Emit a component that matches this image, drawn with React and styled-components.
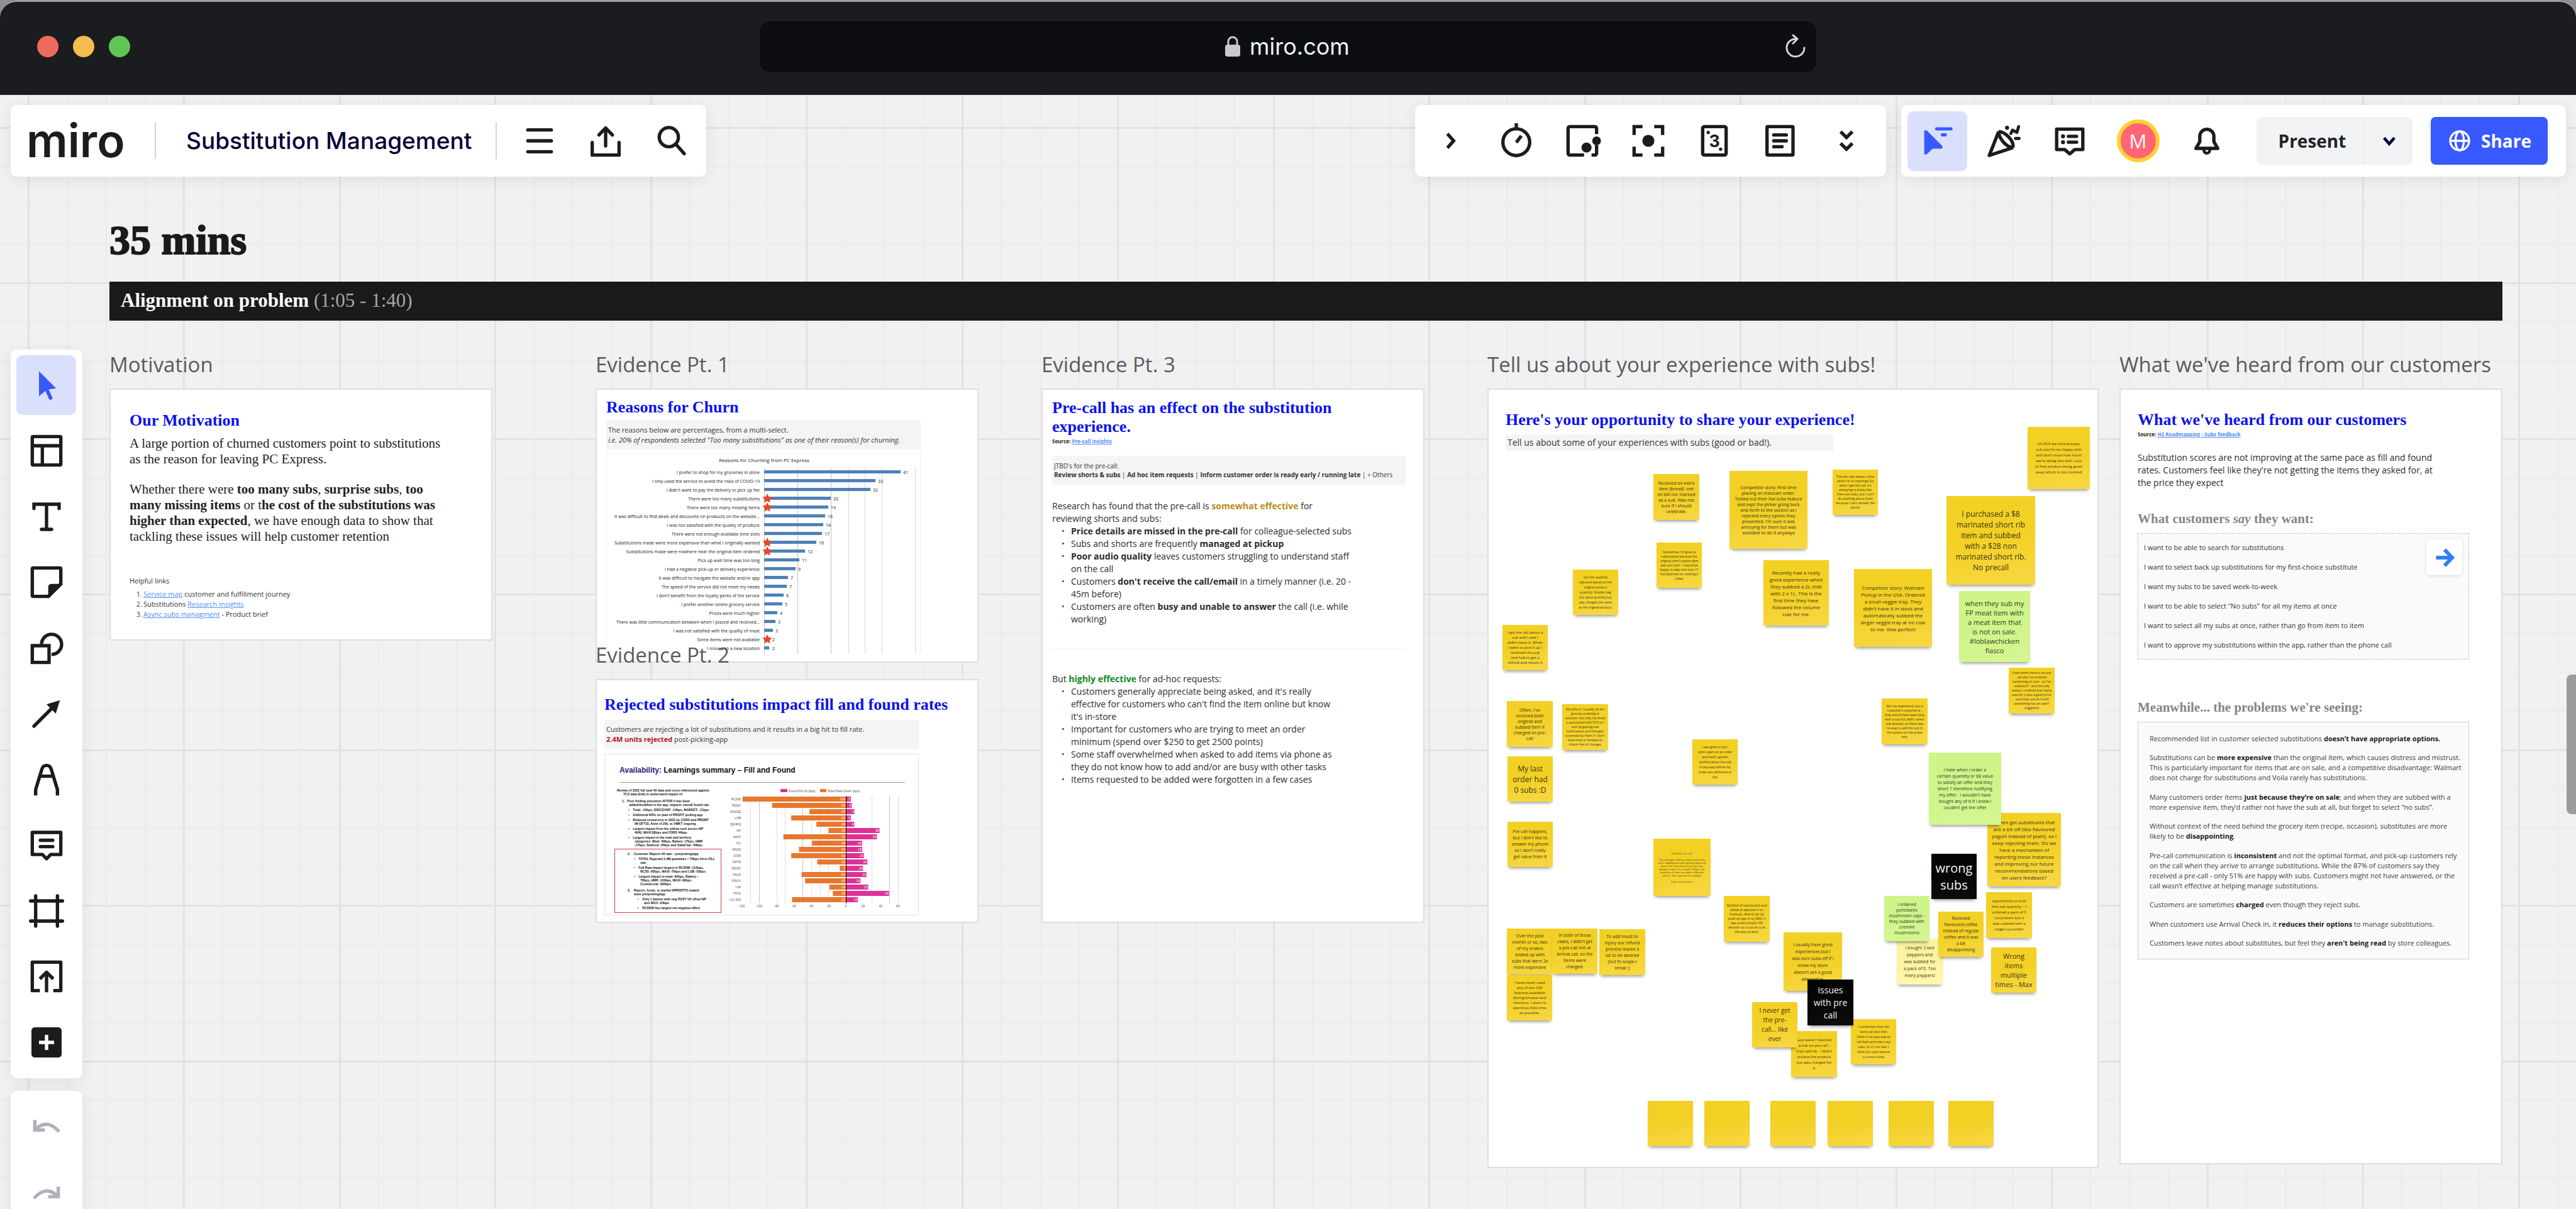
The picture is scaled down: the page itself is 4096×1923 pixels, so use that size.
import React from "react";
import styled, { createGlobalStyle, css } from "styled-components";

const sans = `"Open Sans", "Noto Sans", sans-serif`;
const serif = `"Liberation Serif", "Times New Roman", serif`;
const ink = "#1c1c1e";
const brand = "#3859ff";

const Global = createGlobalStyle`
  *, *::before, *::after { box-sizing: border-box; }
  body { margin: 0; background: #8f9196; font-family: ${sans}; color: #333; }
  h1, h2, h3, p, ul, ol { margin: 0; padding: 0; font-weight: inherit; }
  ul, ol { list-style: none; }
  button, input { font: inherit; color: inherit; border: 0; padding: 0; margin: 0; background: none; }
`;

/* ---------- browser window ---------- */

const Window = styled.div`
  display: flex;
  flex-direction: column;
  height: 100vh;
  overflow: hidden;
`;

const Chrome = styled.header`
  display: grid;
  grid-template-columns: 1fr 41% 1fr;
  align-items: center;
  height: 151px;
  flex: none;
  padding-bottom: 3px;
  background: #1b1c1f;
  box-shadow: inset 0 3px 0 #9fa1a7;
  border-radius: 26px 26px 0 0;
`;

const Lights = styled.div`
  display: flex;
  gap: 23px;
  padding-left: 59px;
`;

const Light = styled.span`
  width: 34px;
  height: 34px;
  border-radius: 50%;
  background: ${(p) => p.$color};
`;

const Address = styled.div`
  display: flex;
  align-items: center;
  height: 80px;
  padding: 0 16px;
  border-radius: 16px;
  background: #0c0e11;
  color: #f2f2f2;
  font: 400 36px/44px Inter, sans-serif;
`;

const AddressField = styled.label`
  display: flex;
  flex: 1;
  align-items: center;
  justify-content: center;
  gap: 14px;
  padding-left: 36px;
`;

const AddressInput = styled.input`
  width: 164px;
  outline: none;
`;

const PlainButton = styled.button`
  display: flex;
  align-items: center;
  justify-content: center;
  cursor: pointer;
`;

/* ---------- canvas ---------- */

const minor = "#ebebec";
const major = "#e2e2e3";
const gridStops = `
  ${major} 0 3px, transparent 3px 62px,
  ${minor} 62px 64px, transparent 64px 124px,
  ${minor} 124px 126px, transparent 126px 186px,
  ${minor} 186px 188px, transparent 188px 247px,
  ${major} 247px 250px, transparent 250px 309px,
  ${minor} 309px 311px, transparent 311px 371px,
  ${minor} 371px 373px, transparent 373px 433px,
  ${minor} 433px 435px, transparent 435px 495px`;

const Canvas = styled.main`
  position: relative;
  flex: 1;
  min-height: 0;
  overflow: hidden;
  background-color: #f1f1f1;
  background-image: linear-gradient(to right, ${gridStops}), linear-gradient(to bottom, ${gridStops});
  background-size: 495px 495px;
  background-position: 44px 51px;
`;

const panel = css`
  background: #fff;
  border-radius: 10px;
  box-shadow: 0 4px 24px rgba(20, 20, 50, 0.08);
`;

const TopBar = styled.div`
  position: absolute;
  z-index: 5;
  top: 16px;
  left: 17px;
  right: 16px;
  display: flex;
  gap: 24px;
`;

const Panel = styled.section`
  ${panel}
  display: flex;
  align-items: center;
  height: 114px;
  gap: ${(p) => p.$gap ?? 10}px;
  padding: 0 ${(p) => p.$end ?? 10}px 0 ${(p) => p.$start ?? 10}px;
  margin-right: ${(p) => (p.$push ? "auto" : 0)};
`;

const Logo = styled.a`
  width: 172px;
  color: ${ink};
  text-decoration: none;
  font: 600 73px/92px Inter, sans-serif;
`;

const Rule = styled.span`
  width: 2px;
  height: 58px;
  background: #d3d2de;
  margin: 0 ${(p) => p.$end}px 0 ${(p) => p.$start}px;
`;

const BoardName = styled.h1`
  color: #050038;
  font: 500 37px/48px Inter, sans-serif;
  white-space: nowrap;
`;

const IconButton = styled(PlainButton)`
  width: 95px;
  height: 95px;
  flex: none;
  border-radius: 10px;
  color: ${(p) => (p.$on ? brand : p.$faded ? "#aeb0bd" : ink)};
  background: ${(p) => (p.$on ? "#dadffc" : "transparent")};
  margin: 0 ${(p) => p.$side ?? 0}px;
`;

const Avatar = styled.span`
  display: flex;
  align-items: center;
  justify-content: center;
  width: 68px;
  height: 68px;
  border: 6px solid #ffd02f;
  border-radius: 50%;
  background: #ff6575;
  color: #fff;
  font: 500 31px/40px ${sans};
`;

const Split = styled.div`
  display: flex;
  height: 76px;
  margin: 0 19px 0 22px;
  border-radius: 8px;
  background: #f2f3f5;
  font: 700 28px/40px ${sans};
  color: #222428;
`;

const SplitMain = styled(PlainButton)`
  width: 171px;
  padding-left: 6px;
`;

const SplitMore = styled(PlainButton)`
  width: 77px;
  border-left: 2px solid #ebecf1;
  color: #050038;
`;

const Share = styled(PlainButton)`
  width: 186px;
  height: 76px;
  gap: 14px;
  border-radius: 8px;
  background: ${brand};
  color: #fff;
  font: 700 28px/40px ${sans};
`;

const Rail = styled.nav`
  position: absolute;
  z-index: 4;
  top: 405px;
  left: 17px;
  display: flex;
  flex-direction: column;
  gap: 20px;
`;

const RailPanel = styled.div`
  ${panel}
  display: flex;
  flex-direction: column;
  justify-content: space-between;
  width: 114px;
  height: ${(p) => p.$height}px;
  padding: 9px 9px 10px;
`;

const ScrollThumb = styled.div`
  position: absolute;
  z-index: 6;
  right: 0;
  top: 922px;
  width: 15px;
  height: 222px;
  border-radius: 8px 0 0 8px;
  background: #9c9c9e;
`;

/* ---------- board ---------- */

const Board = styled.div`
  padding: 198px 117px 0 174px;
`;

const Duration = styled.h2`
  font: 700 66px/66px ${serif};
  color: #1a1a1a;
  -webkit-text-stroke: 2px #1a1a1a;
`;

const Banner = styled.h2`
  height: 62px;
  margin: 33px 0 48px;
  padding-left: 18px;
  background: #1a1a1a;
  color: #fff;
  font: 700 31px/60px ${serif};
`;

const BannerTime = styled.span`
  color: #a6a6a6;
  font-weight: 400;
`;

const Columns = styled.div`
  display: flex;
  align-items: flex-start;
`;

const Column = styled.div`
  flex: ${(p) => p.$grow ?? 609} 1 0;
  min-width: 0;
  margin-left: ${(p) => p.$gap ?? 0}px;
`;

const FrameTitle = styled.h3`
  position: relative;
  z-index: 1;
  margin: ${(p) => (p.$overlap ? "-34px" : 0)} 0 16px;
  color: #5a5a5c;
  font: 400 33px/44px ${sans};
  white-space: nowrap;
`;

const Frame = styled.article`
  position: relative;
  height: ${(p) => p.$height}px;
  padding: ${(p) => p.$top}px ${(p) => p.$right ?? 28}px 0 ${(p) => p.$left}px;
  border: 2px solid #dedede;
  background: #fff;
`;

const Heading = styled.h3`
  color: #0a12f0;
  font: 700 26px/30px ${serif};
  white-space: nowrap;
`;

const SubHeading = styled.h3`
  margin: ${(p) => p.$above}px 0 10px;
  color: #858585;
  font: 700 21px/25px ${serif};
`;

const Prose = styled.p`
  margin-top: ${(p) => p.$above}px;
  color: #222;
  font: 400 21px/25px ${serif};
  white-space: nowrap;
`;

const Small = styled.div`
  margin-top: ${(p) => p.$above ?? 0}px;
  color: #333;
  font: 400 11px/16px ${sans};
  white-space: nowrap;
`;

const Body = styled.div`
  margin-top: ${(p) => p.$above}px;
  color: #2b2b2b;
  font: 400 14px/20px ${sans};
  white-space: nowrap;
`;

const Bullets = styled.ul`
  li {
    position: relative;
    padding-left: 30px;
  }
  li::before {
    content: "•";
    position: absolute;
    left: 15px;
    font-size: 12px;
  }
`;

const LinkList = styled.ol`
  margin-top: 5px;
  padding-left: 22px;
  list-style: decimal;
  li::marker { font-size: 10px; }
`;

const Link = styled.a`
  color: #4f8df5;
  text-decoration: underline;
`;

const Source = styled.p`
  margin-top: ${(p) => p.$above}px;
  color: #222;
  font: 700 8px/12px ${sans};
`;

const Callout = styled.div`
  max-width: ${(p) => p.$width ?? 564}px;
  height: ${(p) => p.$height ?? 46}px;
  margin-top: ${(p) => p.$above}px;
  padding: ${(p) => p.$inset ?? 7}px 3px 0;
  background: #f4f4f4;
  color: #333;
  font: 400 ${(p) => p.$size ?? 11}px / ${(p) => p.$line ?? 16}px ${sans};
  white-space: nowrap;
`;

const Accent = styled.b`
  color: ${(p) => p.$color};
`;

const Divider = styled.hr`
  height: 1px;
  margin: 37px 0 0;
  border: 0;
  background: #ececec;
`;

const ChartBox = styled.div`
  width: 500px;
  max-width: 100%;
  height: 318px;
  margin-top: 6px;
  border: 1px solid #f0f0f0;
  border-bottom: 0;
`;

const WantBox = styled.div`
  position: relative;
  padding: 14px 9px;
  border: 1px dashed #bdbdbd;
  background: #fafafa;
`;

const WantList = styled.ul`
  display: flex;
  flex-direction: column;
  gap: 15px;
  color: #333;
  font: 400 11px/16px ${sans};
`;

const GoButton = styled(PlainButton)`
  position: absolute;
  top: 9px;
  right: 10px;
  width: 57px;
  height: 57px;
  border-radius: 5px;
  background: #fff;
  color: #2d7ff9;
  box-shadow: 0 1px 4px rgba(0, 0, 0, 0.15);
`;

const ProblemBox = styled.div`
  display: flex;
  flex-direction: column;
  justify-content: space-between;
  height: 378px;
  padding: 18px 0 17px 18px;
  border: 1px solid #cfcfcf;
  background: #fafafa;
  color: #3a3a3a;
  font: 400 11px/16px ${sans};
  white-space: nowrap;
  b { color: #1a1a1a; }
`;

/* ---------- summary slide ---------- */

const Slide = styled.div`
  width: 500px;
  max-width: 100%;
  height: 257px;
  margin-top: 8px;
  padding: 17px 21px 0 15px;
  border: 1px solid #e2e2e2;
`;

const SlideTitle = styled.h4`
  margin: 0 0 0 8px;
  padding-bottom: 11px;
  border-bottom: 1px solid #9a9a9a;
  color: #111;
  font: 700 12px/16px "Liberation Sans", Arial, sans-serif;
  span { color: #1c2473; }
`;

const SlideBody = styled.div`
  display: flex;
  justify-content: space-between;
  margin-top: 9px;
`;

const SlideNotes = styled.div`
  width: 170px;
  color: #111;
  font: 700 5px/6px "Liberation Sans", Arial, sans-serif;
  white-space: pre;
`;

const SlideItem = styled.p`
  margin: 0 0 ${(p) => p.$after ?? 2}px ${(p) => p.$indent ?? 22}px;
  padding-left: 10px;
  text-indent: -10px;
`;

const RedBox = styled.div`
  height: 102px;
  padding: 4px 4px 0 0;
  border: 1px solid #c8413f;
`;

/* ---------- sticky notes ---------- */

const tones = {
  yellow: ["#f3d024", "#f7d843", "#3a3415"],
  green: ["#cff48a", "#d5f692", "#2f3a1c"],
  black: ["#050505", "#0d0d0d", "#f4f4f4"],
  pale: ["#fbf3a0", "#fff9b0", "#3a3718"],
};

const Note = styled.div`
  position: absolute;
  left: ${(p) => p.$x}px;
  top: ${(p) => p.$y}px;
  display: flex;
  align-items: center;
  justify-content: center;
  width: ${(p) => p.$s}px;
  height: ${(p) => p.$s}px;
  margin: -2px 0 0 -2px;
  background: linear-gradient(170deg, ${(p) => tones[p.$tone][0]} 45%, ${(p) => tones[p.$tone][1]});
  box-shadow: 0 5px 5px -3px rgba(0, 0, 0, 0.42);
  color: ${(p) => tones[p.$tone][2]};
  font: 400 ${(p) => p.$f}px / ${(p) => p.$l}px ${sans};
  text-align: center;
  white-space: pre;
`;

// x, y, side, font size, line height, text, tone
const notes = [
  [264, 136, 73, 7, 9, "Received an extra\nitem (bread) -not\non bill nor marked\nas a sub. Was not\nsure if I should\ncelebrate."],
  [385, 131, 124, 7, 9, "Competitor story: First time\nplacing an Instacart order.\nTested out their live subs feature\nand kept the picker going back\nand forth to the section as I\nrejected every option they\npresented. I'm sure it was\nannoying for them but was\navailable to do it anyways"],
  [549, 129, 72, 5, 7, "The pre-calls always come\nwhen I'm in meetings! So\nwhen I get the call, it's\nannoying to know that\nthere are subs, but I can't\ndo anything about them\nbecause I can't answer the\nphone"],
  [859, 61, 99, 6, 9, "On PCX we refund every\nsub you're not happy with\nand don't track how much\nwe're doing this with. Lots\nof free product being given\naway which is not counted"],
  [730, 171, 141, 12, 17, "I purchased a $8\nmarinated short rib\nitem and subbed\nwith a $28 non\nmarinated short rib.\nNo precall"],
  [269, 245, 72, 5, 7, "Sometimes I'm given a\nsubstitution because the\noriginal item's expiry date\nwas too soon - I would be\nhappy to take that item if I\nhad planned on cooking it\ntoday"],
  [136, 288, 72, 5, 8, "Got the quantity\nadjusted based on the\noriginal product\nquantity. Smaller bag\nbut same quantity but\nwas charged the same\nas the original product."],
  [439, 273, 104, 8, 11, "Recently had a really\ngood experience when\nthey subbed a 2L milk\nwith 2 x 1L. This is the\nfirst time they have\nfollowed the volume\nrule for me."],
  [583, 287, 124, 8, 11, "Competitor story: Walmart\nPickup in the USA. Ordered\na small veggie tray. They\ndidn't have it in stock and\nautomatically subbed the\nlarger veggie tray at no cost\nto me. Was perfect!"],
  [750, 322, 113, 11, 15, "when they sub my\nFP meat item with\na meat item that\nis not on sale.\n#loblawchicken\nfiasco", "green"],
  [24, 376, 72, 6, 8, "I got the call about a\nsub and I said I\ndidn't want it. When\nI went to pick it up I\nreceived the sub\nand had to get a\nrefund and return it"],
  [829, 444, 73, 5, 7, "I hate when there is no pre-\ncall and I've ordered\nsomething on sale - so I've\nordered 6 - and the only\nreason I ordered that many\nwas b/c it was a good price\n- and they sub all 6 with\nsomething not on sale!!!\nArgghhhh"],
  [31, 497, 73, 7, 9, "Often, I've\nreceived both\noriginal and\nsubbed item if\ncharged on pre-\ncall"],
  [119, 502, 73, 5, 7, "My wife or I usually do the\ngrocery ordering in\nisolation, but only my email\nis associated with PCX so I\nend up getting sub\nnotifications and she gets\nsurprised by them if I don't\nhave time to forward or\ninform her of changes"],
  [627, 493, 73, 5, 7, "Not my experience, but a\ncustomer's experience -\nthey would have been okay\nwith a sub but didn't select\nsub allowed, so there was\nno way to add the sub in\nthe system on the picker\nend."],
  [32, 585, 72, 12, 17, "My last\norder had\n0 subs :D"],
  [326, 558, 72, 5, 8, "I was given a sub I\ndidn't want on an order\nand hadn't gotten\nnotified about the sub\nin any way before my\norder was delivered to\nme."],
  [795, 675, 117, 8, 11, "I often get substitutes that\nare a bit off (like flavoured\nyogurt instead of plain), so I\nkeep rejecting them. Do we\nhave a mechanism of\nreporting these instances\nand improving our future\nrecommendations based\non users feedback?"],
  [702, 579, 115, 7, 10, "I hate when i order a\ncertain quantity or $$ value\nto satisfy an offer and they\nshort 1 therefore nullifying\nmy offer.  I wouldn't have\nbought any of it if i knew i\ncoudln't get the offer", "green"],
  [32, 689, 72, 7, 10, "Pre call happens,\nbut I don't like to\nanswer my phone\nso I don't really\nget value from it"],
  [264, 716, 91, 4, 5, "I liked the pre call.\n\nThe colleague told me some items they\nwere subbing out and I quickly approved\nthem. The meat they chose was also\ngoing to expire in a couple of days and\nasked me if I was cool with it. My wife\nwasn't...but I approved it anyway.\n\nEasy conversation."],
  [706, 740, 72, 20, 27, "wrong\nsubs", "black"],
  [376, 807, 73, 5, 7, "Notified of substitution and\nasked to approve it on\nInstacart. Able to do via\npush on app or by SMS. It\nwas a very simple Y/N\ndecision so could do it on\nthe spot at work."],
  [651, 875, 73, 7, 11, "I bought 3 bell\npeppers and\nwas subbed for\na pack of 6. Too\nmany peppers!", "pale"],
  [631, 807, 72, 7, 9, "I ordered\nportobello\nmushroom caps -\nthey subbed with\ncremini\nmushrooms", "green"],
  [793, 801, 73, 6, 9, "opportunity to look\ninto sub quantity -- I\nordered a pack of 3\ncucumbers but it\nwas subbed with a\nsingle cucumber"],
  [717, 832, 72, 7, 10, "Received\nflavoured coffee\ninstead of regular\ncoffee and it was\na bit\ndisappointing"],
  [31, 859, 73, 7, 10, "Over the past\nmonth or so, two\nof my orders\nended up with\nsubs that were 2x\nmore expensive"],
  [103, 859, 72, 7, 10, "In both of those\ncases, I didn't get\na pre-call not at\nArrival call, so the\nitems were\ncharged."],
  [178, 860, 73, 7, 10, "To add insult to\ninjury our refund\nprocess leaves a\nlot to be desired\n(out fo scope I\nknow :)"],
  [31, 933, 72, 6, 8, "I have never used\nany of our CSS\nfeatures available\nduring browse and\ncheckout. I want to\nspend as little time\nas possible."],
  [471, 865, 93, 7, 11, "I usually have good\nexperiences but I\nalso turn subs off if I\nknow my store\ndoesn't sell a good\nalternative."],
  [801, 889, 72, 11, 15, "Wrong\nitems\nmultiple\ntimes - Max"],
  [578, 1003, 72, 5, 8, "I sometimes miss the\nstore call and then\nthere is no easy way to\ncall back and reject any\nsubs, or it's too late. I\nthink this subs feature\nis a must have!"],
  [509, 940, 73, 14, 20, "issues\nwith pre\ncall", "black"],
  [483, 1022, 73, 6, 9, "Last week I rejected\na sub on pre-call -\nthey said ok.  I didn't\nrecieve the product\nbut was charged for\nit"],
  [421, 976, 72, 10, 15, "I never get\nthe pre-\ncall... like\never"],
  [255, 1133, 72, 7, 9, ""],
  [345, 1133, 72, 7, 9, ""],
  [450, 1133, 72, 7, 9, ""],
  [541, 1133, 72, 7, 9, ""],
  [638, 1133, 72, 7, 9, ""],
  [733, 1133, 72, 7, 9, ""],
];

/* ---------- icons ---------- */

const Icon = ({ size = 64, children, sw = 2 }) => (
  <svg width={size} height={size} viewBox="0 0 24 24" fill="none" stroke="currentColor" strokeWidth={sw} aria-hidden="true">
    {children}
  </svg>
);

const solid = { fill: "currentColor", stroke: "none" };

const icons = {
  menu: <path d="M5 5.500h14M5 12h14M5 18.500h14" strokeLinecap="round" />,
  upload: <path d="M4 13v7.500h16V13M12 15V4.500M8 8.500 12 4.300l4 4.200" strokeLinejoin="round" strokeLinecap="round" />,
  search: (
    <>
      <circle cx="10.300" cy="9.800" r="5.700" />
      <path d="m14.500 14 5 5.700" strokeLinecap="round" />
    </>
  ),
  next: <path d="m10.300 7.800 3.700 4.200-3.700 4.200" />,
  timer: (
    <>
      <circle cx="12" cy="12.800" r="8" />
      <path d="M12 13l3-4M12 5V1.500" />
    </>
  ),
  frame: (
    <>
      <path d="M13 20.500H4.500a1 1 0 0 1-1-1v-15a1 1 0 0 1 1-1h15a1 1 0 0 1 1 1V8M20.500 14.500v5a1 1 0 0 1-1 1h-2" />
      <circle cx="20.500" cy="12" r="2.600" {...solid} />
      <circle cx="14.500" cy="16" r="3" {...solid} />
    </>
  ),
  focus: (
    <>
      <path d="M8.500 3.500h-5v5M15.500 3.500h5v5M8.500 20.500h-5v-5M15.500 20.500h5v-5" />
      <circle cx="12" cy="12" r="3.600" {...solid} />
    </>
  ),
  notes: (
    <>
      <rect x="4" y="3.500" width="15.500" height="17" rx="0.500" />
      <path d="M8 8.500h7.500M8 12h7.500M8 15.500h5" strokeLinecap="round" />
    </>
  ),
  more: <path d="m8.500 6.500 3.500 3.500 3.500-3.500M8.500 13.500l3.500 3.500 3.500-3.500" />,
  follow: (
    <>
      <path d="M4 6.500c0-.9 1-1.200 1.600-.6L14.500 14.800c.8.800.4 1.900-.7 1.900H9L5.500 20c-.6.600-1.500.2-1.500-.6z" {...solid} />
      <rect x="10.400" y="3.900" width="10.500" height="1.900" rx="0.900" {...solid} />
      <rect x="13.800" y="7.500" width="3.700" height="1.900" rx="0.900" {...solid} />
    </>
  ),
  party: (
    <>
      <path d="M9 6.500 3.400 20.700 17.600 16M9 6.500C13 6.500 18.200 12 17.600 16M9 6.500C9 10 13 15.800 17.600 16" strokeLinejoin="round" />
      <path d="M16.300 7.600l1-2 2.600 1.400 1-3.500M19 10.600h2.200" strokeLinecap="round" strokeLinejoin="round" strokeWidth="1.800" />
      <circle cx="14" cy="4.200" r="1.200" {...solid} />
    </>
  ),
  comments: (
    <>
      <path d="M4.200 5h15.600v12.200h-4.800L12 19.800l-3-2.600H4.200z" strokeLinejoin="round" />
      <path d="M11.200 9.300h4.900M11.200 12.800h4.900" strokeLinecap="round" />
      <circle cx="8" cy="9.300" r="1.200" {...solid} />
      <circle cx="8" cy="12.800" r="1.200" {...solid} />
    </>
  ),
  bell: (
    <>
      <path d="M5.500 16.500 7.800 12.500V9.300a4.200 4.200 0 0 1 8.400 0v3.200l2.300 4z" strokeLinejoin="round" />
      <path d="M10.300 17v.7a1.700 1.700 0 0 0 3.400 0V17" strokeWidth="1.700" />
    </>
  ),
  chevron: <path d="m8.500 10 3.500 4 3.500-4" />,
  globe: (
    <>
      <circle cx="12" cy="12" r="9" />
      <ellipse cx="12" cy="12" rx="4" ry="9" />
      <path d="M3 12h18" />
    </>
  ),
  select: <path d="M7.500 3.500 17.700 13.800l-4.400.5 2.200 4.900c.4 1-1.500 2-2 1l-2.200-4.900-3.800 3.200z" {...solid} />,
  template: <path d="M4 3.500h16a.5.5 0 0 1 .5.5v16a.5.5 0 0 1-.5.5H4a.5.5 0 0 1-.5-.5V4a.5.5 0 0 1 .5-.5zM3.500 9h17M9.500 9v11.500" />,
  text: <path d="M4.500 7V4.500h15V7M12 4.500v15M9 19.500h6" strokeLinecap="round" />,
  sticky: (
    <>
      <path d="M20.500 13V4a.5.5 0 0 0-.5-.5H4a.5.5 0 0 0-.5.5v16a.5.5 0 0 0 .5.500h9z" />
      <path d="M13 21.500v-6.500q0-2 2-2h6.500v.5l-8 8z" {...solid} />
    </>
  ),
  shapes: (
    <>
      <path d="M4 10.500h9.500V20.500H3.500v-10z" />
      <path d="M9 9.500a6 6 0 1 1 6 6.200" />
    </>
  ),
  arrow: (
    <>
      <path d="M4.500 19.500 15 9" strokeLinecap="round" />
      <path d="M20 4 17.500 12 12 6.500z" {...solid} />
    </>
  ),
  pen: <path d="M5.500 21.500v-3.500L9 6.500q.6-3 3-3t3 3l3.500 11.500v3.500M8.500 10h7" />,
  comment: (
    <>
      <path d="M3.500 4.500h17v13.200h-6L12 20.200l-2.500-2.500h-6z" strokeLinejoin="round" />
      <path d="M8.300 9.200h7.400M8.300 13h7.400" strokeLinecap="round" />
    </>
  ),
  artboard: <path d="M5.500 3v18M18.500 3v18M2.500 6h19M2.500 18h19" strokeLinecap="round" />,
  import: <path d="M8 20.500H3.500v-17h17v17H16M12 21.500V10M8 13.500l4-4 4 4" strokeLinejoin="round" />,
  add: (
    <>
      <rect x="3" y="3" width="18" height="18" rx="2" {...solid} />
      <path d="M12 7.500v9M7.500 12h9" stroke="#fff" />
    </>
  ),
  undo: <path d="M5 8v6h6M5.500 13.500q7-6.500 14 1.500" />,
  redo: <path d="M19 8v6h-6M18.500 13.500q-7-6.500-14 1.500" />,
};

const EstimateIcon = () => (
  <Icon>
    <rect x="5" y="3.500" width="14" height="17" rx="1" />
    <circle cx="8.300" cy="7" r="1" {...solid} />
    <circle cx="15.700" cy="17" r="1" {...solid} />
    <text x="12" y="15.600" fontSize="10" fontWeight="700" fontFamily="Inter, sans-serif" textAnchor="middle" {...solid}>3</text>
  </Icon>
);

const Tool = ({ name, label, children, ...rest }) => (
  <IconButton type="button" aria-label={label ?? name} {...rest}>
    {children ?? <Icon>{icons[name]}</Icon>}
  </IconButton>
);

/* ---------- charts ---------- */

const churn = [
  ["I prefer to shop for my groceries in store", 41, 217],
  ["I only used the service to avoid the risks of COVID-19", 33, 177],
  ["I didn't want to pay the delivery or pick up fee", 32, 169],
  ["There were too many substitutions", 20, 106, true],
  ["There were too many missing items", 19, 102, true],
  ["It was difficult to find deals and discounts on products on the website...", 18, 97],
  ["I was not satisfied with the quality of produce", 18, 94],
  ["There were not enough available time slots", 17, 92],
  ["Substitutions made were more expensive than what I originally wanted", 16, 83, true],
  ["Substitutions made were nowhere near the original item ordered", 12, 65, true],
  ["Pick up wait time was too long", 11, 56],
  ["I had a negative pick-up or delivery experience", 9, 50],
  ["It was difficult to navigate the website and/or app", 7, 38],
  ["The speed of the service did not meet my needs", 7, 36],
  ["I don't benefit from the loyalty perks of the service", 6, 31],
  ["I prefer another online grocery service", 5, 29],
  ["Prices were much higher", 4, 21],
  ["There was little communication between when I placed and received...", 3, 18],
  ["I was not satisfied with the quality of meat", 3, 14],
  ["Some items were not available", 2, 8, true],
  ["I moved to a new location", 2, 8],
];

const Star = ({ x, y }) => {
  const points = Array.from({ length: 10 }, (_, i) => {
    const r = i % 2 ? 4 : 8;
    const a = (Math.PI / 5) * i - Math.PI / 2;
    return `${x + r * Math.cos(a)},${y + r * Math.sin(a)}`;
  }).join(" ");
  return <polygon points={points} fill="#ea4628" />;
};

const ChurnChart = () => (
  <svg width="498" height="318" viewBox="0 0 498 318" fontFamily="Open Sans, sans-serif" fontSize="7" fill="#222" role="img" aria-label="Reasons for churning">
    <text x="250" y="13" fontSize="8" textAnchor="middle">Reasons for Churning from PC Express</text>
    {[0, 53, 106, 134, 160, 187, 240].map((x) => (
      <path key={x} d={`M${250 + x}.5 22V318`} stroke={x % 53 ? "#d6d6d6" : "#c4c4c4"} />
    ))}
    {churn.map(([label, value, width]) => [label, value, width]).map(([label, value, width], i) => {
      const y = 29 + i * 14;
      return (
        <g key={label}>
          <text x="243" y={y + 3} textAnchor="end">{label}</text>
          <rect x="250" y={y - 3} width={width} height="5" fill="#4f81b8" />
          <text x={250 + Math.max(width, 9) + 4} y={y + 3}>{value}</text>
        </g>
      );
    })}
    {churn.map(([label, , , star], i) => star && <Star key={label} x={255} y={29 + i * 14} />)}
  </svg>
);

const banners = [
  ["RCSW", 119, 5], ["RSSO", 85, 6], ["RASSE", 42, 9], ["LOB", 63, 5], ["ZEHRS", 34, 9], ["NF", 20, 38],
  ["MAXI", 72, 35], ["YIG", 39, 18], ["RASS", 54, 18], ["DOM", 63, 20], ["FRTR", 33, 24], ["RENO", 7, 19],
  ["VALM", 51, 23], ["PROV", 47, 16], ["YIM", 19, 25], ["TNTA", 15, 49], ["CO-IND", 62, 13],
];

const FillChart = () => {
  const unit = 1.38;
  const zero = 188;
  return (
    <svg width="282" height="192" viewBox="0 0 282 192" fontFamily="Liberation Sans, sans-serif" fontSize="5" fill="#555" role="img" aria-label="Fill and found by banner">
      <rect x="84" y="1" width="11" height="5" fill="#dc3196" />
      <text x="97" y="6">Found Fill Up (bps)</text>
      <rect x="147" y="1" width="10" height="5" fill="#e8772e" />
      <text x="159" y="6">Filled Rate Down (bps)</text>
      {[-110, -100, -80, -70, -50, -40, -30, -20, 30, 50, 60].map((v) => (
        <path key={v} d={`M${Math.round(zero + v * unit)}.5 12V182`} stroke={v % 50 ? "#dedede" : "#c6c6c6"} />
      ))}
      {banners.map(([name, down, up], i) => {
        const y = 13 + i * 10;
        return (
          <g key={name}>
            <text x="21" y={y + 6} textAnchor="end">{name}</text>
            <rect x={zero - down * unit} y={y} width={down * unit} height="8" fill="#e8772e" />
            <rect x={zero} y={y} width={up * unit + 1} height="8" fill="#dc3196" />
            <text x={zero - 1} y={y + 6} textAnchor="end" fill="#fff">-{down}</text>
            <text x={zero + up * unit} y={y + 6} textAnchor="end" fill="#fff">{up}</text>
          </g>
        );
      })}
      <path d={`M${zero}.5 12V183`} stroke="#111" />
      {[-120, -100, -80, -60, -40, -20, 0, 20, 40, 60].map((v) => (
        <text key={v} x={zero + v * unit} y="189" textAnchor="middle">{v}</text>
      ))}
    </svg>
  );
};

/* ---------- frames ---------- */

const Motivation = () => (
  <Column>
    <FrameTitle>Motivation</FrameTitle>
    <Frame $height={401} $top={34} $left={30}>
      <Heading>Our Motivation</Heading>
      <Prose $above={9}>
        A large portion of churned customers point to substitutions<br />
        as the reason for leaving PC Express.
      </Prose>
      <Prose $above={23}>
        Whether there were <b>too many subs</b>, <b>surprise subs</b>, <b>too</b><br />
        <b>many missing items</b> or t<b>he cost of the substitutions was</b><br />
        <b>higher than expected</b>, we have enough data to show that<br />
        tackling these issues will help customer retention
      </Prose>
      <Small $above={50}>
        Helpful links
        <LinkList>
          <li><Link href="#service-map">Service map</Link> customer and fulfillment journey</li>
          <li>Substitutions <Link href="#research">Research insights</Link></li>
          <li><Link href="#async">Async subs managment</Link> - Product brief</li>
        </LinkList>
      </Small>
    </Frame>
  </Column>
);

const Evidence = () => (
  <Column $gap={164}>
    <FrameTitle>Evidence Pt. 1</FrameTitle>
    <Frame $height={436} $top={13} $left={15}>
      <Heading>Reasons for Churn</Heading>
      <Callout $width={500} $above={6}>
        The reasons below are percentages, from a multi-select.<br />
        <i>i.e. 20% of respondents selected "Too many substitutions" as one of their reason(s) for churning.</i>
      </Callout>
      <ChartBox><ChurnChart /></ChartBox>
    </Frame>
    <FrameTitle $overlap>Evidence Pt. 2</FrameTitle>
    <Frame $height={388} $top={24} $left={12}>
      <Heading>Rejected substitutions impact fill and found rates</Heading>
      <Callout $width={500} $above={9}>
        Customers are rejecting a lot of substitutions and it results in a big hit to fill rate.<br />
        <Accent $color="#b01818">2.4M units rejected</Accent> post-picking-app
      </Callout>
      <Slide>
        <SlideTitle><span>Availability:</span> Learnings summary – Fill and Found</SlideTitle>
        <SlideBody>
          <SlideNotes>
            <SlideItem $indent={4} $after={5}>{"Review of 2022 full year fill data and cross-referenced against\nTCS data (link) to understand impact of:"}</SlideItem>
            <SlideItem $indent={12} $after={2}>{"1.   Poor finding execution AFTER it has been\n added/modified in the app, impacts overall found rate"}</SlideItem>
            <SlideItem>{"•    Total: -10bps, DISCOUNT: -14bps, MARKET: -11bps"}</SlideItem>
            <SlideItem>{"•    Additional KPIs on plan of PROFIT picking app"}</SlideItem>
            <SlideItem>{"•    Reduced conversion in 2022 by CORA and PROMT\nIM OFT10, Alvin of 20k, to VMKT ongoing"}</SlideItem>
            <SlideItem>{"•    Largest impact from the yellow rush across NP\n4040, MAXI 80bps and FORS 44bps"}</SlideItem>
            <SlideItem $after={3}>{"•    Largest impact in the total and territory\ncategories: Meat -40bps, Bakery -17bps, HMR\n-17bps, Seafood -34bps and Salad bar -49bps"}</SlideItem>
            <RedBox>
              <SlideItem $indent={20}>{"2.    Customer Rejects fill rate – pre/picking/app"}</SlideItem>
              <SlideItem $indent={30}>{"•    TOTAL Rejected 2.4M quantities = 70bps hit to FILL\nrate"}</SlideItem>
              <SlideItem $indent={30}>{"•    Full Rate Impact largest in RCSSW -110bps,\nRCSS -85bps, MAXI -70bps and LOB -53bps"}</SlideItem>
              <SlideItem $indent={30} $after={4}>{"•    Largest impact in meat -93bps, Bakery –\n78bps, HMR -110bps, MAXI -90bps\nCommercial -300bps"}</SlideItem>
              <SlideItem $indent={20}>{"3.    Rejects, foods, to market NPROFITS toward\nwere pre/picking/app"}</SlideItem>
              <SlideItem $indent={36}>{"•    Only 1 banner with neg POST VS offset NP\nand WGA -34bps"}</SlideItem>
              <SlideItem $indent={36}>{"•    RCSSW has largest net negative effect"}</SlideItem>
            </RedBox>
          </SlideNotes>
          <FillChart />
        </SlideBody>
      </Slide>
    </Frame>
  </Column>
);

const PreCall = () => (
  <Column $gap={100}>
    <FrameTitle>Evidence Pt. 3</FrameTitle>
    <Frame $height={850} $top={14} $left={15}>
      <Heading>Pre-call has an effect on the substitution<br />experience.</Heading>
      <Source $above={2}>Source: <Link href="#pre-call">Pre-call insights</Link></Source>
      <Callout $above={17} $inset={9} $size={10} $line={14}>
        JTBD's for the pre-call:<br />
        <b>Review shorts &amp; subs</b> | <b>Ad hoc item requests</b> | <b>Inform customer order is ready early / running late</b> | + Others
      </Callout>
      <Body $above={24}>
        Research has found that the pre-call is <Accent $color="#bb8c14">somewhat effective</Accent> for<br />
        reviewing shorts and subs:
        <Bullets>
          <li><b>Price details are missed in the pre-call</b> for colleague-selected subs</li>
          <li>Subs and shorts are frequently <b>managed at pickup</b></li>
          <li><b>Poor audio quality</b> leaves customers struggling to understand staff<br />on the call</li>
          <li>Customers <b>don't receive the call/email</b> in a timely manner (i.e. 20 -<br />45m before)</li>
          <li>Customers are often <b>busy and unable to answer</b> the call (i.e. while<br />working)</li>
        </Bullets>
      </Body>
      <Divider />
      <Body $above={37}>
        But <Accent $color="#118a1b">highly effective</Accent> for ad-hoc requests:
        <Bullets>
          <li>Customers generally appreciate being asked, and it's really<br />effective for customers who can't find the item online but know<br />it's in-store</li>
          <li>Important for customers who are trying to meet an order<br />minimum (spend over $250 to get 2500 points)</li>
          <li>Some staff overwhelmed when asked to add items via phone as<br />they do not know how to add and/or are busy with other tasks</li>
          <li>Items requested to be added were forgotten in a few cases</li>
        </Bullets>
      </Body>
    </Frame>
  </Column>
);

const Experience = () => (
  <Column $gap={100} $grow={972}>
    <FrameTitle>Tell us about your experience with subs!</FrameTitle>
    <Frame $height={1240} $top={33} $left={27}>
      <Heading>Here's your opportunity to share your experience!</Heading>
      <Callout $width={521} $height={26} $above={8} $inset={0} $size={14} $line={25}>
        Tell us about some of your experiences with subs (good or bad!).
      </Callout>
      {notes.map(([x, y, s, f, l, text, tone = "yellow"], i) => (
        <Note key={i} $x={x} $y={y} $s={s} $f={f} $l={l} $tone={tone}>{text}</Note>
      ))}
    </Frame>
  </Column>
);

const wants = [
  "I want to be able to search for substitutions",
  "I want to select back up substitutions for my first-choice substitute",
  "I want my subs to be saved week-to-week",
  'I want to be able to select "No subs" for all my items at once',
  "I want to select all my subs at once, rather than go from item to item",
  "I want to approve my substitutions within the app, rather than the phone call",
];

const Customers = () => (
  <Column $gap={33}>
    <FrameTitle>What we've heard from our customers</FrameTitle>
    <Frame $height={1234} $top={33} $left={27} $right={51}>
      <Heading>What we've heard from our customers</Heading>
      <Source $above={2}>Source: <Link href="#roadmap">H2 Roadmapping - Subs feedback</Link></Source>
      <Body $above={21}>
        Substitution scores are not improving at the same pace as fill and found<br />
        rates. Customers feel like they're not getting the items they asked for, at<br />
        the price they expect
      </Body>
      <SubHeading $above={35}>What customers <i>say</i> they want:</SubHeading>
      <WantBox>
        <WantList>{wants.map((w) => <li key={w}>{w}</li>)}</WantList>
        <GoButton type="button" aria-label="Open">
          <Icon size={36} sw={4}><path d="M3 12h16M12 3.500l8 8.500-8 8.500" /></Icon>
        </GoButton>
      </WantBox>
      <SubHeading $above={64}>Meanwhile... the problems we're seeing:</SubHeading>
      <ProblemBox>
        <p>Recommended list in customer selected substitutions <b>doesn’t have appropriate options.</b></p>
        <p>Substitutions can be <b>more expensive</b> than the original item, which causes distress and mistrust.<br />This is particularly important for items that are on sale, and a competitive disadvantage: Walmart<br />does not charge for substitutions and Voila rarely has substitutions.</p>
        <p>Many customers order items <b>just because they’re on sale</b>; and when they are subbed with a<br />more expensive item, they’d rather not have the sub at all, but forget to select “no subs”.</p>
        <p>Without context of the need behind the grocery item (recipe, occasion), substitutes are more<br />likely to be <b>disappointing</b>.</p>
        <p>Pre-call communication is <b>inconsistent</b> and not the optimal format, and pick-up customers rely<br />on the call when they arrive to arrange substitutions. While the 87% of customers say they<br />received a pre-call - only 51% are happy with subs. Customers might not have answered, or the<br />call wasn’t effective at helping manage substitutions.</p>
        <p>Customers are sometimes <b>charged</b> even though they reject subs.</p>
        <p>When customers use Arrival Check in, it <b>reduces their options</b> to manage substitutions.</p>
        <p>Customers leave notes about substitutes, but feel they <b>aren't being read</b> by store colleagues.</p>
      </ProblemBox>
    </Frame>
  </Column>
);

const railTools = ["select", "template", "text", "sticky", "shapes", "arrow", "pen", "comment", "artboard", "import", "add"];

export default function App() {
  return (
    <Window>
      <Global />
      <Chrome>
        <Lights>
          <Light $color="#ee6a5f" />
          <Light $color="#f5bd4f" />
          <Light $color="#61c554" />
        </Lights>
        <Address>
          <AddressField>
            <svg width="26" height="34" viewBox="0 0 26 34" aria-hidden="true">
              <rect x="1" y="14" width="24" height="19" rx="4" fill="#c9cacc" />
              <path d="M6 15V9a7 7 0 0 1 14 0v6" fill="none" stroke="#c9cacc" strokeWidth="3" />
            </svg>
            <AddressInput aria-label="Address" defaultValue="miro.com" />
          </AddressField>
          <PlainButton type="button" aria-label="Reload">
            <svg width="34" height="40" viewBox="0 0 34 40" fill="none" stroke="#d5d6d8" strokeWidth="3" strokeLinecap="round" strokeLinejoin="round" aria-hidden="true">
              <path d="M18 8A14 14 0 1 0 31 22M13 2l7 6-7 7" />
            </svg>
          </PlainButton>
        </Address>
      </Chrome>

      <Canvas>
        <TopBar>
          <Panel $start={25} $end={8} $push>
            <Logo href="#home">miro</Logo>
            <Rule $start={22} $end={38} />
            <BoardName>Substitution Management</BoardName>
            <Rule $start={28} $end={10} />
            <Tool name="menu" />
            <Tool name="upload" />
            <Tool name="search" />
          </Panel>
          <Panel $start={8} $end={16}>
            <Tool name="next" />
            <Tool name="timer" />
            <Tool name="frame" />
            <Tool name="focus" />
            <Tool label="estimate"><EstimateIcon /></Tool>
            <Tool name="notes" />
            <Tool name="more" />
          </Panel>
          <Panel $end={29}>
            <Tool name="follow" $on />
            <Tool name="party" />
            <Tool name="comments" />
            <Tool label="Profile" $side={4}><Avatar>M</Avatar></Tool>
            <Tool name="bell" />
            <Split>
              <SplitMain type="button">Present</SplitMain>
              <SplitMore type="button" aria-label="Present options"><Icon size={56} sw={2}>{icons.chevron}</Icon></SplitMore>
            </Split>
            <Share type="button"><Icon size={40} sw={2}>{icons.globe}</Icon>Share</Share>
          </Panel>
        </TopBar>

        <Rail>
          <RailPanel $height={1159}>
            {railTools.map((t) => <Tool key={t} name={t} $on={t === "select"} />)}
          </RailPanel>
          <RailPanel $height={220}>
            <Tool name="undo" $faded />
            <Tool name="redo" $faded />
          </RailPanel>
        </Rail>

        <Board>
          <Duration>35 mins</Duration>
          <Banner>Alignment on problem <BannerTime>(1:05 - 1:40)</BannerTime></Banner>
          <Columns>
            <Motivation />
            <Evidence />
            <PreCall />
            <Experience />
            <Customers />
          </Columns>
        </Board>
        <ScrollThumb />
      </Canvas>
    </Window>
  );
}
